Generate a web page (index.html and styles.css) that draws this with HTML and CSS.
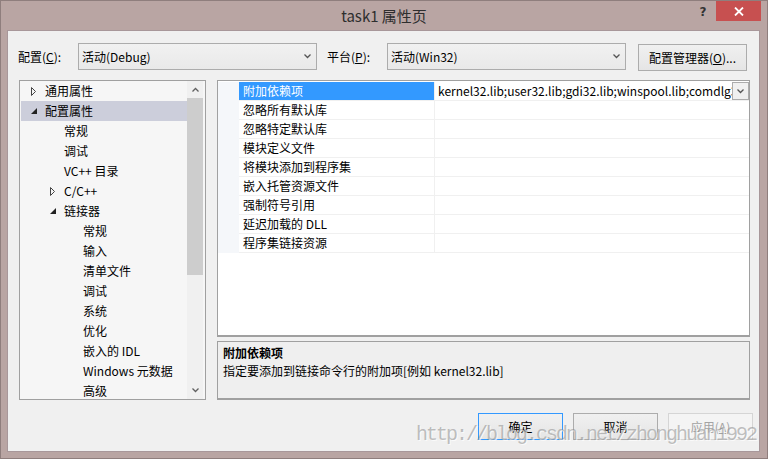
FILE: index.html
```html
<!DOCTYPE html>
<html lang="zh-CN">
<head>
    <meta charset="UTF-8">
    <title>task1 属性页</title>
    <link rel="stylesheet" href="styles.css">
</head>
<body>
    <div class="window">
        <div class="titlebar">
            <span></span>
            <span class="title">task1 属性页</span>
            <div class="caption">
                <span class="help">?</span>
                <span class="close">
                    <svg width="10" height="9" viewBox="0 0 10 9"><path d="M1 0.5 L9 8.5 M9 0.5 L1 8.5" stroke="#fff" stroke-width="1.8"/></svg>
                </span>
            </div>
        </div>

        <div class="client">
            <div class="toolbar">
                <label class="lbl">配置(<u>C</u>):</label>
                <div class="combo">
                    <span>活动(Debug)</span>
                    <svg class="chev" width="7" height="5" viewBox="0 0 7 5"><path d="M0.5 0.5 L3.5 3.5 L6.5 0.5" fill="none" stroke="#555" stroke-width="1.3"/></svg>
                </div>
                <label class="lbl">平台(<u>P</u>):</label>
                <div class="combo">
                    <span>活动(Win32)</span>
                    <svg class="chev" width="7" height="5" viewBox="0 0 7 5"><path d="M0.5 0.5 L3.5 3.5 L6.5 0.5" fill="none" stroke="#555" stroke-width="1.3"/></svg>
                </div>
                <button class="btn mgr">配置管理器(<u>O</u>)...</button>
            </div>

            <div class="main">
                <div class="tree">
                    <ul class="nodes">
                        <li class="node l0"><span class="tw"><svg width="6" height="9" viewBox="0 0 6 9"><path d="M0.5 0.5 L4.5 4.5 L0.5 8.5 Z" fill="none" stroke="#444"/></svg></span>通用属性</li>
                        <li class="node l0 sel"><span class="tw"><svg width="6" height="6" viewBox="0 0 6 6"><path d="M6 0 L6 6 L0 6 Z" fill="#222"/></svg></span>配置属性</li>
                        <li class="node l1"><span class="tw"></span>常规</li>
                        <li class="node l1"><span class="tw"></span>调试</li>
                        <li class="node l1"><span class="tw"></span>VC++ 目录</li>
                        <li class="node l1"><span class="tw"><svg width="6" height="9" viewBox="0 0 6 9"><path d="M0.5 0.5 L4.5 4.5 L0.5 8.5 Z" fill="none" stroke="#444"/></svg></span>C/C++</li>
                        <li class="node l1"><span class="tw"><svg width="6" height="6" viewBox="0 0 6 6"><path d="M6 0 L6 6 L0 6 Z" fill="#222"/></svg></span>链接器</li>
                        <li class="node l2"><span class="tw"></span>常规</li>
                        <li class="node l2"><span class="tw"></span>输入</li>
                        <li class="node l2"><span class="tw"></span>清单文件</li>
                        <li class="node l2"><span class="tw"></span>调试</li>
                        <li class="node l2"><span class="tw"></span>系统</li>
                        <li class="node l2"><span class="tw"></span>优化</li>
                        <li class="node l2"><span class="tw"></span>嵌入的 IDL</li>
                        <li class="node l2"><span class="tw"></span>Windows 元数据</li>
                        <li class="node l2"><span class="tw"></span>高级</li>
                    </ul>
                    <div class="vscroll">
                        <div class="sb-btn"><svg width="7" height="5" viewBox="0 0 7 5"><path d="M0.5 4.5 L3.5 1.5 L6.5 4.5" fill="none" stroke="#606060" stroke-width="1.3"/></svg></div>
                        <div class="sb-track"><div class="thumb"></div></div>
                        <div class="sb-btn"><svg width="7" height="5" viewBox="0 0 7 5"><path d="M0.5 0.5 L3.5 3.5 L6.5 0.5" fill="none" stroke="#606060" stroke-width="1.3"/></svg></div>
                    </div>
                </div>

                <div class="side">
                    <div class="grid">
                        <div class="row sel">
                            <div class="gut"></div>
                            <div class="name">附加依赖项</div>
                            <div class="val">
                                <span class="val-text">kernel32.lib;user32.lib;gdi32.lib;winspool.lib;comdlg32.lib;advapi32.lib</span>
                                <span class="drop"><svg width="7" height="5" viewBox="0 0 7 5"><path d="M0.5 0.5 L3.5 3.5 L6.5 0.5" fill="none" stroke="#555" stroke-width="1.3"/></svg></span>
                            </div>
                        </div>
                        <div class="row"><div class="gut"></div><div class="name">忽略所有默认库</div><div class="val"></div></div>
                        <div class="row"><div class="gut"></div><div class="name">忽略特定默认库</div><div class="val"></div></div>
                        <div class="row"><div class="gut"></div><div class="name">模块定义文件</div><div class="val"></div></div>
                        <div class="row"><div class="gut"></div><div class="name">将模块添加到程序集</div><div class="val"></div></div>
                        <div class="row"><div class="gut"></div><div class="name">嵌入托管资源文件</div><div class="val"></div></div>
                        <div class="row"><div class="gut"></div><div class="name">强制符号引用</div><div class="val"></div></div>
                        <div class="row"><div class="gut"></div><div class="name">延迟加载的 DLL</div><div class="val"></div></div>
                        <div class="row"><div class="gut"></div><div class="name">程序集链接资源</div><div class="val"></div></div>
                    </div>
                    <div class="desc">
                        <div class="desc-title">附加依赖项</div>
                        <div class="desc-text">指定要添加到链接命令行的附加项[例如 kernel32.lib]</div>
                    </div>
                </div>
            </div>

            <div class="footer">
                <button class="btn default">确定</button>
                <button class="btn">取消</button>
                <button class="btn" disabled>应用(<u>A</u>)</button>
            </div>

            <div class="watermark">http://blog.csdn.net/zhonghuan1992</div>
        </div>
    </div>
</body>
</html>
```

FILE: styles.css
```css
* {
    box-sizing: border-box;
}

body {
    margin: 0;
    background: #b9a5a3;
    font-family: "Noto Sans CJK SC", "Noto Sans", sans-serif;
    font-size: 12px;
    color: #000;
}

.window {
    width: 768px;
    height: 459px;
    border: 1px solid #8f7e7d;
    background: #b9a5a3;
    display: flex;
    flex-direction: column;
}

/* title bar */
.titlebar {
    height: 29px;
    display: grid;
    grid-template-columns: 1fr auto 1fr;
}

.title {
    align-self: center;
    font-size: 15px;
    line-height: 20px;
    color: #2e2e2e;
}

.caption {
    justify-self: end;
    display: flex;
    margin-right: 6px;
}

.help {
    width: 26px;
    height: 20px;
    font-family: "DejaVu Sans", sans-serif;
    font-weight: bold;
    font-size: 12px;
    line-height: 22px;
    text-align: center;
    color: #333;
}

.close {
    width: 45px;
    height: 20px;
    background: #c75050;
    display: flex;
    align-items: center;
    justify-content: center;
}

/* client area */
.client {
    position: relative;
    flex: 1;
    margin: 0 7px 6px 6px;
    background: #f0f0f0;
    border: 1px solid #a8979a;
}

.toolbar {
    display: flex;
    align-items: center;
    height: 27px;
    margin-top: 12px;
    padding-left: 10px;
}

.lbl {
    width: 60px;
    line-height: 16px;
}

.combo {
    width: 239px;
    height: 27px;
    margin-right: 10px;
    border: 1px solid #acacac;
    background: linear-gradient(#f1f1f1, #e9e9e9);
    display: flex;
    align-items: center;
    justify-content: space-between;
    padding: 0 5px 0 3px;
}

.combo + .lbl + .combo {
    margin-right: 12px;
}

.btn {
    font-family: inherit;
    font-size: 12px;
    color: #000;
    height: 27px;
    width: 85px;
    padding: 0;
    border: 1px solid #acacac;
    background: linear-gradient(#f0f0f0, #e5e5e5);
}

.btn.mgr {
    width: 109px;
    margin-top: 1px;
}

.btn.default {
    border-color: #3399ff;
}

.btn:disabled {
    border-color: #d5d5d5;
    background: #f4f4f4;
    color: #a3a3a3;
}

.main {
    display: flex;
    gap: 11px;
    margin-top: 10px;
    padding-left: 11px;
    height: 320px;
}

/* tree */
.tree {
    width: 187px;
    border: 1px solid #a0a0a0;
    background: #f6f6f6;
    display: flex;
}

.nodes {
    flex: 1;
    list-style: none;
    margin: 0;
    padding: 0 0 0 1px;
    overflow: hidden;
}

.node {
    height: 20px;
    line-height: 20px;
    display: flex;
    align-items: center;
    white-space: nowrap;
}

.node.sel {
    background: #cccedb;
}

.l0 { padding-left: 8px; }
.l1 { padding-left: 27px; }
.l2 { padding-left: 46px; }

.tw {
    width: 16px;
    height: 20px;
    display: flex;
    align-items: center;
    padding-left: 2px;
}

.vscroll {
    width: 16px;
    margin-right: 2px;
    background: #f0f0f0;
    display: flex;
    flex-direction: column;
}

.sb-btn {
    height: 17px;
    display: flex;
    align-items: center;
    justify-content: center;
}

.sb-track {
    flex: 1;
}

.thumb {
    height: 177px;
    background: #cdcdcd;
}

/* property grid */
.side {
    width: 533px;
    display: flex;
    flex-direction: column;
    gap: 4px;
}

.grid {
    height: 257px;
    border: 1px solid #a0a0a0;
    border-bottom-width: 2px;
    background: #fff;
    padding-top: 1px;
}

.row {
    display: grid;
    grid-template-columns: 21px 196px 1fr;
    height: 19px;
}

.gut {
    background: #f5f7fa;
}

.name {
    border-right: 1px solid #f0f0f0;
    border-bottom: 1px solid #f0f0f0;
    padding-left: 4px;
    line-height: 18px;
    white-space: nowrap;
}

.row.sel .name {
    background: #3399ff;
    color: #fff;
}

.val {
    border-bottom: 1px solid #f0f0f0;
    display: flex;
    min-width: 0;
}

.val-text {
    flex: 1;
    min-width: 0;
    overflow: hidden;
    white-space: nowrap;
    padding-left: 3px;
    line-height: 18px;
}

.drop {
    width: 17px;
    height: 18px;
    border: 1px solid #acacac;
    background: #f0f0f0;
    display: flex;
    align-items: center;
    justify-content: center;
}

.desc {
    flex: 1;
    border: 1px solid #a0a0a0;
    border-bottom: 2px solid #a0a0a0;
    background: #efefef;
    padding: 2px 5px;
    line-height: 18px;
}

.desc-title {
    font-weight: bold;
}

.footer {
    display: flex;
    justify-content: flex-end;
    gap: 10px;
    margin-top: 13px;
    padding-right: 6px;
}

.watermark {
    position: absolute;
    left: 408px;
    top: 392px;
    font-family: "Liberation Mono", monospace;
    font-size: 20px;
    letter-spacing: -2px;
    color: rgba(140, 140, 140, 0.55);
    text-shadow: 1px 1px 0 rgba(255, 255, 255, 0.7);
    white-space: nowrap;
    pointer-events: none;
}
```
